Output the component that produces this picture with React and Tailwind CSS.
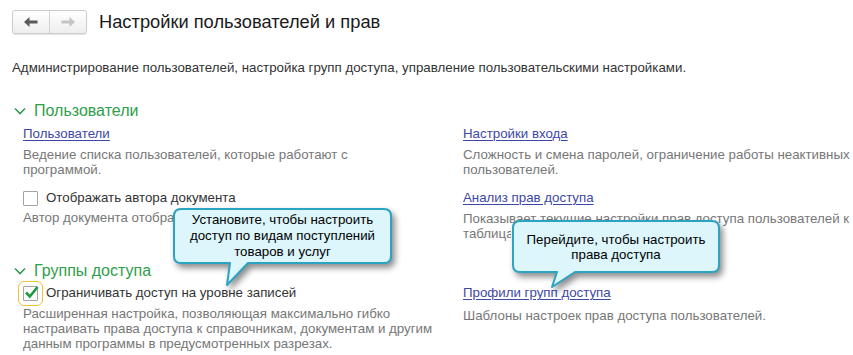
import React from 'react'

const Arrow = ({ dir, color }) => (
  <svg width="14" height="10" viewBox="0 0 14 10" className={dir === 'right' ? 'rotate-180' : ''}>
    <path d="M0 5 L5.5 0 L5.5 3.5 L13.5 3.5 L13.5 6.5 L5.5 6.5 L5.5 10 Z" fill={color} />
  </svg>
)

const Chevron = () => (
  <svg width="12" height="8" viewBox="0 0 12 8" className="shrink-0">
    <path d="M1 1.5 L6 6.5 L11 1.5" fill="none" stroke="#2e9e4a" strokeWidth="1.6" />
  </svg>
)

const Link = ({ children }) => (
  <div className="text-[13.3px] leading-[16px] text-[#3d48a6] underline underline-offset-2 decoration-[1px]">{children}</div>
)

const Note = ({ children, className = '' }) => (
  <div className={`text-[13.3px] leading-[15px] text-[#777] whitespace-nowrap ${className}`}>{children}</div>
)

const Bubble = ({ left, top, w, h, tail, lines, lh }) => {
  const r = 8
  const [b1, b2, tx, ty] = tail
  const d = `M${r} 1 H${w - r} Q${w - 1} 1 ${w - 1} ${r} V${h - r} Q${w - 1} ${h - 1} ${w - r} ${h - 1} H${b2} L${tx} ${ty} L${b1} ${h - 1} H${r} Q1 ${h - 1} 1 ${h - r} V${r} Q1 1 ${r} 1 Z`
  return (
    <div className="absolute" style={{ left, top, width: w, height: ty + 2 }}>
      <svg width={w + 2} height={ty + 2} className="absolute left-0 top-0 overflow-visible drop-shadow-[3px_4px_3px_rgba(0,0,0,0.45)]">
        <path d={d} fill="#dcf6fc" stroke="#2ba3c2" strokeWidth="2" strokeLinejoin="round" />
      </svg>
      <div className="absolute left-0 top-0 flex flex-col items-center justify-center text-[13.3px] text-black" style={{ width: w, height: h, lineHeight: lh }}>
        {lines.map((l, i) => <div key={i} className="whitespace-nowrap">{l}</div>)}
      </div>
    </div>
  )
}

export default function App() {
  return (
    <div className="relative w-[853px] h-[355px] overflow-hidden bg-white font-['Liberation_Sans',Arial,sans-serif] text-[#333]">
      {/* header */}
      <div className="flex items-center pt-[10px] pl-[12px]">
        <div className="flex h-[24px] rounded-[3px] border border-[#cdcdcd] bg-gradient-to-b from-white to-[#eeeeee] shadow-[0_1px_1px_rgba(0,0,0,0.12)]">
          <div className="w-[37px] flex items-center justify-center border-r border-[#d2d2d2]">
            <Arrow dir="left" color="#5a5a5a" />
          </div>
          <div className="w-[36px] flex items-center justify-center">
            <Arrow dir="right" color="#c4c4c4" />
          </div>
        </div>
        <div className="ml-[12px] text-[18.3px] leading-[24px] text-[#1a1a1a]">Настройки пользователей и прав</div>
      </div>

      <div className="mt-[26px] pl-[12px] text-[13.3px] leading-[16px] text-[#333] whitespace-nowrap">
        Администрирование пользователей, настройка групп доступа, управление пользовательскими настройками.
      </div>

      {/* section 1 */}
      <div className="mt-[25px] pl-[14px] flex items-center gap-[8px] h-[20px]">
        <Chevron />
        <div className="text-[16px] leading-[20px] text-[#2e9e4a]">Пользователи</div>
      </div>
      <div className="grid grid-cols-[440px_400px] pl-[23px]">
        <div>
          <div className="mt-[5px]"><Link>Пользователи</Link></div>
          <Note className="mt-[5px]">Ведение списка пользователей, которые работают с<br />программой.</Note>
          <div className="mt-[13px] flex items-center gap-[8px] h-[16px]">
            <div className="w-[15px] h-[15px] border border-[#a3a3a3] rounded-[1px] bg-white" />
            <div className="text-[13.3px] leading-[16px] text-[#333]">Отображать автора документа</div>
          </div>
          <Note className="mt-[4px] w-[150px] overflow-hidden">Автор документа отображается в списках</Note>
        </div>
        <div>
          <div className="mt-[5px]"><Link>Настройки входа</Link></div>
          <Note className="mt-[5px]">Сложность и смена паролей, ограничение работы неактивных<br />пользователей.</Note>
          <div className="mt-[13px]"><Link>Анализ прав доступа</Link></div>
          <Note className="mt-[5px]">Показывает текущие настройки прав доступа пользователей к<br /><span className="inline-block w-[48px] overflow-hidden align-top">таблицам.</span></Note>
        </div>
      </div>

      {/* section 2 */}
      <div className="mt-[20px] pl-[14px] flex items-center gap-[8px] h-[20px]">
        <Chevron />
        <div className="text-[16px] leading-[20px] text-[#2e9e4a]">Группы доступа</div>
      </div>
      <div className="grid grid-cols-[440px_400px] pl-[23px]">
        <div>
          <div className="mt-[4px] flex items-center gap-[8px] h-[16px]">
            <div className="relative w-[15px] h-[15px] border border-[#a3a3a3] rounded-[1px] bg-white outline outline-[1.5px] outline-[#f2c230] outline-offset-[4px]">
              <svg width="16" height="15" viewBox="0 0 16 15" className="absolute left-[0px] top-[-2px]">
                <path d="M2 7.5 L5.8 11.5 L13.5 2" fill="none" stroke="#1f9a3e" strokeWidth="2.6" />
              </svg>
            </div>
            <div className="text-[13.3px] leading-[16px] text-[#333]">Ограничивать доступ на уровне записей</div>
          </div>
          <Note className="mt-[5px] leading-[15.5px]">
            Расширенная настройка, позволяющая максимально гибко<br />
            настраивать права доступа к справочникам, документам и другим<br />
            данным программы в предусмотренных разрезах.
          </Note>
        </div>
        <div>
          <div className="mt-[4px]"><Link>Профили групп доступа</Link></div>
          <Note className="mt-[7px]">Шаблоны настроек прав доступа пользователей.</Note>
        </div>
      </div>

      <Bubble left={173} top={208} w={219} h={56} tail={[57, 75, 54, 77]} lh="16px"
        lines={['Установите, чтобы настроить', 'доступ по видам поступлений', 'товаров и услуг']} />
      <Bubble left={512} top={220} w={208} h={53} tail={[45, 63, 40, 67]} lh="15px"
        lines={['Перейдите, чтобы настроить', 'права доступа']} />
    </div>
  )
}
